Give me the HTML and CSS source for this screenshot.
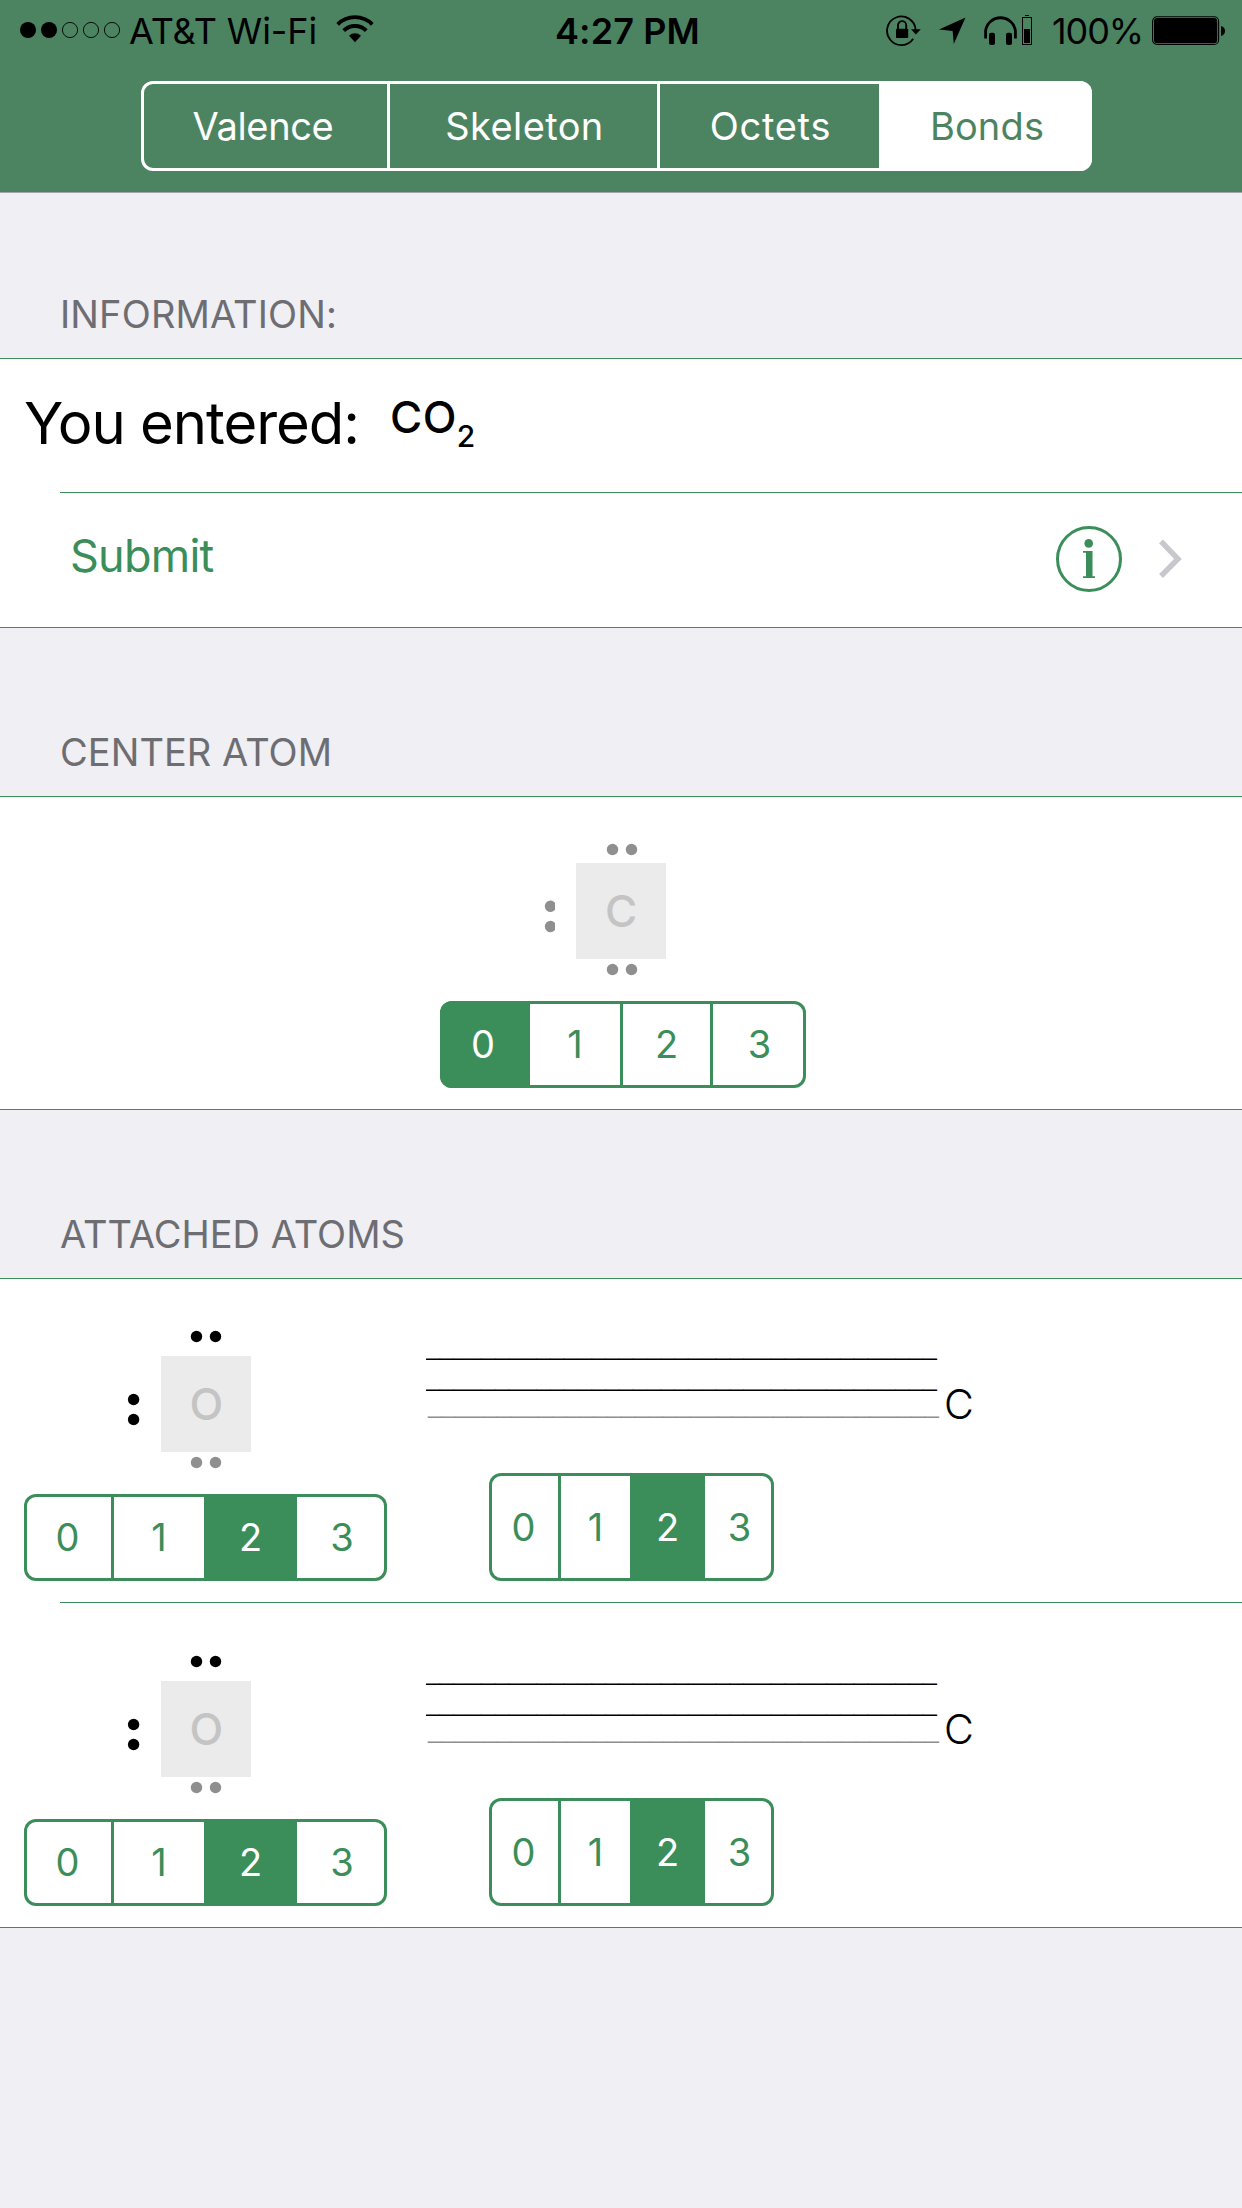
FILE: index.html
```html
<!DOCTYPE html>
<html lang="en">
<head>
<meta charset="utf-8">
<title>Bonds</title>
<link rel="stylesheet" href="styles.css">
</head>
<body>
<header class="header">
  <div class="status">
    <div class="status-left">
      <svg class="signal" width="102" height="18" viewBox="0 0 102 18">
        <circle cx="9" cy="9" r="8"/><circle cx="30" cy="9" r="8"/>
        <g fill="none" stroke="#000" stroke-width="0.9"><circle cx="51" cy="9" r="7.6"/><circle cx="72" cy="9" r="7.6"/><circle cx="93" cy="9" r="7.6"/></g>
      </svg>
      <span class="carrier">AT&amp;T Wi-Fi</span>
      <svg class="wifi" width="38" height="28" viewBox="0 0 38 28">
        <g fill="none" stroke="#000" stroke-width="3.9"><path d="M1.7 9.3A24.5 24.5 0 0 1 36.3 9.3"/><path d="M7.7 15.6A16 16 0 0 1 30.3 15.6"/></g>
        <path d="M19 27.2 13 20.8A8.6 8.6 0 0 1 25 20.8Z"/>
      </svg>
    </div>
    <span class="time">4:27 PM</span>
    <div class="status-right">
      <svg class="lock" width="36" height="32" viewBox="0 0 36 32">
        <path d="M27.2 24.8A14.3 14.3 0 1 1 29.6 15.6" fill="none" stroke="#000" stroke-width="1.8"/>
        <path d="M25 15.2H34.8L29.8 20.4Z"/>
        <rect x="10" y="14.8" width="12.2" height="9.3" rx="0.8"/>
        <path d="M12 15V11.2A4.1 4.1 0 0 1 20.2 11.2V15" fill="none" stroke="#000" stroke-width="1.9"/>
      </svg>
      <svg class="arrow" width="28" height="28" viewBox="0 0 28 28"><path d="M27.5 0.5 15.8 27 14.6 14 1 12.4Z"/></svg>
      <svg class="phones" width="50" height="32" viewBox="0 0 50 32">
        <path d="M2.6 24.5V17A15 15 0 0 1 32.4 17V24.5" fill="none" stroke="#000" stroke-width="2.8"/>
        <rect x="6" y="18.8" width="6" height="12.2" rx="2"/><rect x="23" y="18.8" width="6" height="12.2" rx="2"/>
        <rect x="39.5" y="3.5" width="9" height="27" fill="none" stroke="#000"/><rect x="42" y="1" width="4" height="1"/><rect x="41" y="15" width="6" height="14"/>
      </svg>
      <span class="percent">100%</span>
      <svg class="battery" width="74" height="30" viewBox="0 0 74 30">
        <rect x="0.6" y="0.7" width="66" height="27.8" rx="4.5" fill="none" stroke="#000" stroke-width="1.1"/>
        <rect x="2" y="2" width="63.2" height="25.2" rx="3.2"/>
        <path d="M69 10C71.6 10.6 73 12.5 73 15S71.6 19.2 69 20Z"/>
      </svg>
    </div>
  </div>
  <nav class="seg seg-nav">
    <span class="cell">Valence</span><span class="cell">Skeleton</span><span class="cell">Octets</span><span class="cell on">Bonds</span>
  </nav>
</header>

<h2 class="title">INFORMATION:</h2>
<section class="card">
  <div class="row row-info">
    <span class="label">You entered:</span>
    <span class="formula">CO<span class="index">2</span></span>
  </div>
  <div class="row row-submit">
    <span class="submit">Submit</span>
    <svg class="info" width="66" height="66" viewBox="0 0 66 66">
      <circle cx="33" cy="33" r="31.5" fill="none" stroke="#3b8e59" stroke-width="3"/>
      <circle cx="32.7" cy="17.4" r="4.3" fill="#3b8e59"/>
      <path d="M27 25H36.5V50.3H39V52H27V50.3H30V26.7H27Z" fill="#3b8e59"/>
    </svg>
    <svg class="chevron" width="26" height="42" viewBox="0 0 26 42"><path d="M3 3.4 20 21 3 38" fill="none" stroke="#c7c7cc" stroke-width="5.4"/></svg>
  </div>
</section>

<h2 class="title">CENTER ATOM</h2>
<section class="card card-center">
  <svg class="atom" width="366" height="205" viewBox="0 0 366 205">
    <g fill="#8f8f8f"><circle cx="172.5" cy="53.5" r="5.7"/><circle cx="191.5" cy="53.5" r="5.7"/><circle cx="172.5" cy="173.5" r="5.7"/><circle cx="191.5" cy="173.5" r="5.7"/>
    <path d="M115 106.8A5.7 5.7 0 1 0 115 113.8Z"/><path d="M115 127A5.7 5.7 0 1 0 115 134Z"/></g>
    <rect x="136" y="67" width="90" height="96" fill="#ebebeb"/>
    <text class="symbol" x="181.2" y="131">C</text>
  </svg>
  <div class="seg seg-center"><span class="cell on">0</span><span class="cell">1</span><span class="cell">2</span><span class="cell">3</span></div>
</section>

<h2 class="title title-attached">ATTACHED ATOMS</h2>
<section class="card">
  <div class="row row-atom">
    <div class="side">
      <svg class="atom" width="363" height="216" viewBox="0 0 363 216">
        <circle cx="172.5" cy="58.5" r="5.7"/><circle cx="191.5" cy="58.5" r="5.7"/><circle cx="109.6" cy="121.5" r="5.7"/><circle cx="109.6" cy="141.5" r="5.7"/>
        <g fill="#8f8f8f"><circle cx="172.5" cy="184.5" r="5.7"/><circle cx="191.5" cy="184.5" r="5.7"/></g>
        <rect x="137" y="78" width="90" height="96" fill="#ebebeb"/>
        <text class="symbol" x="182.3" y="142">O</text>
      </svg>
      <div class="seg seg-atom"><span class="cell">0</span><span class="cell">1</span><span class="cell on">2</span><span class="cell">3</span></div>
    </div>
    <div class="side">
      <svg class="bond" width="560" height="195" viewBox="0 0 560 195">
        <text class="line" x="0" y="76.5">_____________________________________</text>
        <text class="line" x="0" y="107.5">_____________________________________</text>
        <text class="line faint" x="2" y="134.5">_____________________________________</text>
        <text class="end" x="518" y="141">C</text>
      </svg>
      <div class="seg seg-bond"><span class="cell">0</span><span class="cell">1</span><span class="cell on">2</span><span class="cell">3</span></div>
    </div>
  </div>
  <div class="row row-atom">
    <div class="side">
      <svg class="atom" width="363" height="216" viewBox="0 0 363 216">
        <circle cx="172.5" cy="58.5" r="5.7"/><circle cx="191.5" cy="58.5" r="5.7"/><circle cx="109.6" cy="121.5" r="5.7"/><circle cx="109.6" cy="141.5" r="5.7"/>
        <g fill="#8f8f8f"><circle cx="172.5" cy="184.5" r="5.7"/><circle cx="191.5" cy="184.5" r="5.7"/></g>
        <rect x="137" y="78" width="90" height="96" fill="#ebebeb"/>
        <text class="symbol" x="182.3" y="142">O</text>
      </svg>
      <div class="seg seg-atom"><span class="cell">0</span><span class="cell">1</span><span class="cell on">2</span><span class="cell">3</span></div>
    </div>
    <div class="side">
      <svg class="bond" width="560" height="195" viewBox="0 0 560 195">
        <text class="line" x="0" y="76.5">_____________________________________</text>
        <text class="line" x="0" y="107.5">_____________________________________</text>
        <text class="line faint" x="2" y="134.5">_____________________________________</text>
        <text class="end" x="518" y="141">C</text>
      </svg>
      <div class="seg seg-bond"><span class="cell">0</span><span class="cell">1</span><span class="cell on">2</span><span class="cell">3</span></div>
    </div>
  </div>
</section>
</body>
</html>
```

FILE: styles.css
```css
* { box-sizing: border-box; }
html, body { margin: 0; }
body {
  width: 1242px;
  min-height: 2208px;
  background: #efeff4;
  color: #000;
  font: 400 38px "Inter", "Liberation Sans", sans-serif;
}
svg { display: block; flex: none; }
span { white-space: nowrap; }

/* Header */
.header { height: 193px; background: #4c8462; border-bottom: 1px solid #a3a3a8; }
.status { display: flex; height: 63px; margin-bottom: 18px; font-size: 36px; line-height: 63px; }
.status-left { display: flex; width: 555px; padding-left: 19px; }
.signal { margin-top: 21px; }
.carrier { width: 206px; padding-left: 8px; letter-spacing: -0.1px; }
.wifi { margin: 15px 0 0 9px; }
.time { width: 331px; font-weight: 600; letter-spacing: 0.1px; }
.status-right { display: flex; }
.lock { margin-top: 14px; }
.arrow { margin: 17px 0 0 16px; }
.phones { margin: 14px 0 0 17px; }
.percent { width: 99px; padding-left: 19px; letter-spacing: -1.1px; }
.battery { margin-top: 16px; margin-left: 20px; }

/* Segmented controls */
.seg { display: flex; border-radius: 12px; overflow: hidden; color: #3b8e59; box-shadow: inset 0 0 0 3px currentColor; }
.cell { display: flex; align-items: center; justify-content: center; flex: none; height: 100%; }
.cell + .cell:not(.on) { border-left: 3px solid #3b8e59; }
.on + .cell:not(.on) { border-left: 0; }
.on { background: #3b8e59; color: #fff; }

.seg-nav { width: 951px; height: 90px; margin-left: 141px; color: #fff; }
.seg-nav .cell + .cell:not(.on) { border-left-color: #fff; }
.seg-nav .on { background: #fff; color: #4c8462; padding-left: 3px; }
.seg-nav .cell:nth-child(1) { width: 246px; padding-right: 2px; letter-spacing: -0.36px; }
.seg-nav .cell:nth-child(2) { width: 270px; padding-left: 2px; letter-spacing: 0.4px; }
.seg-nav .cell:nth-child(3) { width: 222px; padding-left: 2px; letter-spacing: 0.7px; }
.seg-nav .cell:nth-child(4) { width: 213px; letter-spacing: 0.16px; }

.seg-center, .seg-atom { height: 87px; }
.seg-center .cell, .seg-atom .cell { padding-bottom: 2px; }

.seg-center { width: 366px; }
.seg-center .cell:nth-child(1) { width: 90px; padding-right: 4px; }
.seg-center .cell:nth-child(2) { width: 90px; }
.seg-center .cell:nth-child(3) { width: 90px; }
.seg-center .cell:nth-child(4) { width: 96px; }
.seg-center .on + .cell { padding-left: 0; }

.seg-atom { width: 363px; }
.seg-atom .cell:nth-child(1) { width: 87px; }
.seg-atom .cell:nth-child(2) { width: 93px; }
.seg-atom .cell:nth-child(3) { width: 93px; }
.seg-atom .cell:nth-child(4) { width: 90px; }

.seg-bond { width: 285px; height: 108px; margin-left: 63px; }
.seg-bond .cell:nth-child(1) { width: 69px; }
.seg-bond .cell:nth-child(2) { width: 72px; }
.seg-bond .cell:nth-child(3) { width: 75px; }
.seg-bond .cell:nth-child(4) { width: 69px; }

/* Section titles */
.title {
  margin: 0;
  height: 168px;
  padding: 101px 0 0 60px;
  font-size: 38px;
  font-weight: 400;
  line-height: 46px;
  letter-spacing: 0.05px;
  color: #6d6d72;
}
.header + .title { height: 165px; padding-top: 98px; letter-spacing: 0.14px; }
.title-attached { letter-spacing: 0; }

/* Cards */
.card { background: #fff linear-gradient(#3b8e59, #3b8e59) no-repeat 0 0 / 100% 1px; }
.row { display: flex; background: linear-gradient(#3b8e59, #3b8e59) no-repeat 60px 100% / 100% 1px; }
.row:last-child { background-position: 0 100%; }

.row-info { height: 135px; padding-left: 24px; line-height: 130px; }
.label { width: 366px; font-size: 58px; letter-spacing: -1.05px; }
.formula { display: flex; font-size: 44px; font-weight: 500; line-height: 118px; letter-spacing: 0.4px; }
.index { font-size: 30px; line-height: 157px; }

.row-submit { height: 135px; padding-left: 70px; }
.submit { width: 986px; font-size: 45px; line-height: 125px; letter-spacing: -0.75px; color: #3b8e59; }
.info { margin-top: 33px; }
.chevron { margin: 45px 0 0 36px; }

.card-center {
  display: flex;
  flex-direction: column;
  height: 314px;
  padding-left: 440px;
  border-bottom: 1px solid #3b8e59;
}
.row-atom { height: 325px; padding-left: 24px; gap: 39px; }
.symbol { font-size: 44px; font-weight: 500; fill: #c4c4c4; text-anchor: middle; }
.line { font: 24.83px "Liberation Sans", sans-serif; }
.faint { fill: #8f8f8f; }
.end { font-size: 41px; font-weight: 300; }
```
